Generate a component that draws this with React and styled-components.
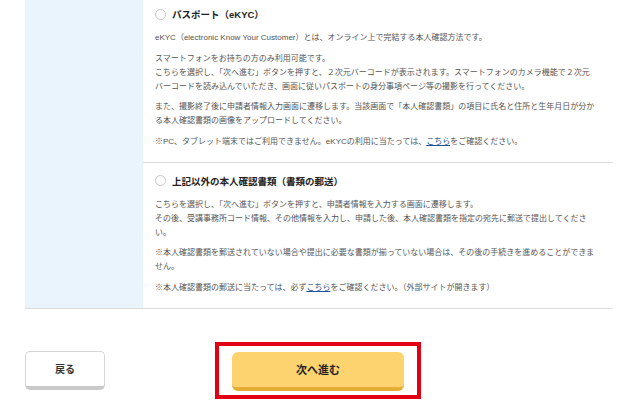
import React from "react";
import styled, { createGlobalStyle } from "styled-components";

const GlobalStyle = createGlobalStyle`
  html, body {
    margin: 0;
    padding: 0;
    background: #fff;
  }
  body {
    font-family: "Liberation Sans", "Noto Sans CJK JP", sans-serif;
    color: #444;
    overflow: hidden;
  }
`;

const Page = styled.div`
  width: 640px;
  height: 405px;
  overflow: hidden;
`;

const Scroll = styled.div`
  margin-top: -4px;
`;

const Table = styled.div`
  margin-left: 25px;
  width: 588px;
  display: grid;
  grid-template-columns: 118px 1fr;
  border-bottom: 1px solid #dcdcdc;
`;

const Label = styled.div`
  background: #eaf4fd;
`;

const Options = styled.div`
  display: flex;
  flex-direction: column;
`;

const Option = styled.div`
  padding: 8px 10px 13px 12px;
  border-bottom: ${(p) => (p.$last ? "none" : "1px solid #dcdcdc")};
`;

const OptionHead = styled.label`
  display: flex;
  align-items: center;
  gap: 6px;
  height: 20px;
  margin-bottom: 7px;
  font-size: 9.5px;
  font-weight: bold;
  color: #222;
`;

const Radio = styled.span`
  width: 11px;
  height: 11px;
  box-sizing: border-box;
  border: 1px solid #c9c9c9;
  border-radius: 50%;
  background: #fff;
  flex: none;
`;

const Text = styled.p`
  margin: 0 0 6.5px;
  font-size: 8px;
  line-height: 14px;
  color: #555;
  white-space: nowrap;

  &:last-child {
    margin-bottom: 0;
  }
`;

const Link = styled.a`
  color: #1c4f93;
  text-decoration: underline;
`;

const Footer = styled.div`
  margin-top: 33px;
  display: grid;
  grid-template-columns: 1fr auto 1fr;
  align-items: center;
  padding: 0 25px;
`;

const BackButton = styled.button`
  justify-self: start;
  width: 80px;
  height: 39px;
  box-sizing: border-box;
  background: #fff;
  border: 1px solid #d6d6d6;
  border-bottom: 4px solid #c9c9c9;
  border-radius: 5px;
  font-family: inherit;
  font-size: 10px;
  font-weight: bold;
  color: #333;
  padding: 0;
`;

const Highlight = styled.div`
  border: 4px solid #e20014;
  padding: 6px 13px 4px 13px;
  margin-left: -4px;
`;

const NextButton = styled.button`
  display: block;
  width: 172px;
  height: 39px;
  box-sizing: border-box;
  background: #fdd36f;
  border: none;
  border-bottom: 4px solid #e5ad36;
  border-radius: 6px;
  font-family: inherit;
  font-size: 11px;
  font-weight: bold;
  color: #222;
  padding: 0;
`;

export default function App() {
  return (
    <Page>
      <GlobalStyle />
      <Scroll>
        <Table>
          <Label />
          <Options>
            <Option>
              <OptionHead>
                <Radio />
                パスポート（eKYC）
              </OptionHead>
              <Text>
                eKYC（electronic Know Your Customer）とは、オンライン上で完結する本人確認方法です。
              </Text>
              <Text>
                スマートフォンをお持ちの方のみ利用可能です。
                <br />
                こちらを選択し、「次へ進む」ボタンを押すと、２次元バーコードが表示されます。スマートフォンのカメラ機能で２次元
                <br />
                バーコードを読み込んでいただき、画面に従いパスポートの身分事項ページ等の撮影を行ってください。
              </Text>
              <Text>
                また、撮影終了後に申請者情報入力画面に遷移します。当該画面で「本人確認書類」の項目に氏名と住所と生年月日が分か
                <br />
                る本人確認書類の画像をアップロードしてください。
              </Text>
              <Text>
                ※PC、タブレット端末ではご利用できません。eKYCの利用に当たっては、
                <Link href="#">こちら</Link>をご確認ください。
              </Text>
            </Option>
            <Option $last>
              <OptionHead>
                <Radio />
                上記以外の本人確認書類（書類の郵送）
              </OptionHead>
              <Text>
                こちらを選択し、「次へ進む」ボタンを押すと、申請者情報を入力する画面に遷移します。
                <br />
                その後、受講事務所コード情報、その他情報を入力し、申請した後、本人確認書類を指定の宛先に郵送で提出してくださ
                <br />
                い。
              </Text>
              <Text>
                ※本人確認書類を郵送されていない場合や提出に必要な書類が揃っていない場合は、その後の手続きを進めることができま
                <br />
                せん。
              </Text>
              <Text>
                ※本人確認書類の郵送に当たっては、必ず<Link href="#">こちら</Link>をご確認ください。（外部サイトが開きます）
              </Text>
            </Option>
          </Options>
        </Table>
        <Footer>
          <BackButton>戻る</BackButton>
          <Highlight>
            <NextButton>次へ進む</NextButton>
          </Highlight>
          <div />
        </Footer>
      </Scroll>
    </Page>
  );
}
